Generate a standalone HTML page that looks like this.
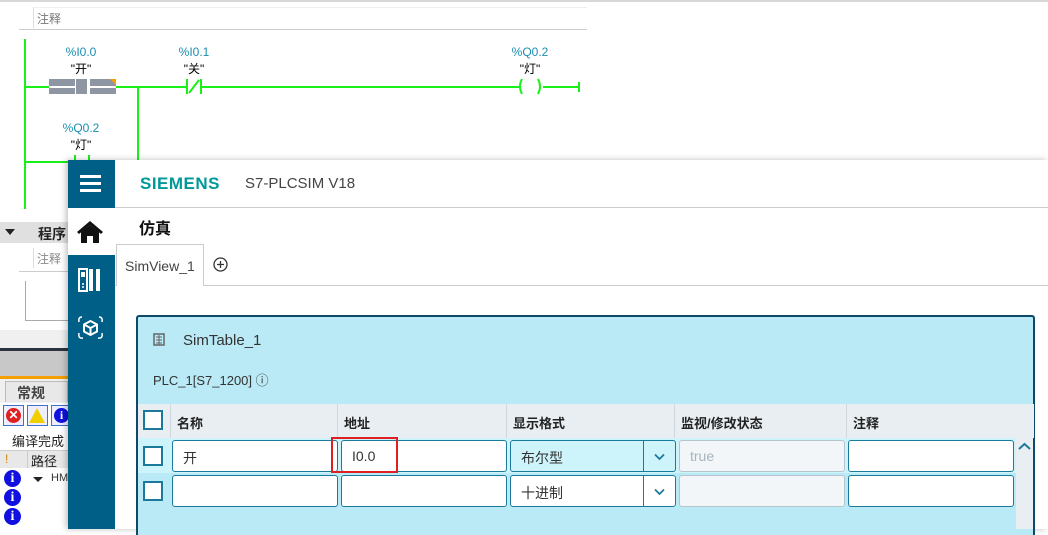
<!DOCTYPE html>
<html><head><meta charset="utf-8"><style>
*{margin:0;padding:0;box-sizing:border-box}
body{width:1048px;height:529px;overflow:hidden;background:#fff;position:relative;font-family:"Liberation Sans","Noto Sans CJK SC",sans-serif;font-size:13px;color:#222}
.a{position:absolute}
.g{position:absolute;background:#19f019}
.lbl{position:absolute;font-size:11px;color:#1a8fb0;width:60px;text-align:center}
.nm{position:absolute;font-size:11px;color:#000;width:60px;text-align:center}
.cb{position:absolute;width:20px;height:20px;border:2px solid #1b7a9b;background:#fff}
.in{position:absolute;height:32px;border:1px solid #1b7a9b;border-radius:3px;background:#fff;font-size:14px;padding:7px 10px;color:#333}
.hd{position:absolute;top:404px;height:34px;font-size:13px;font-weight:bold;padding:9px 6px;border-left:1px solid #d0d8de}
.info{position:absolute;left:4px;width:17px;height:17px;border-radius:50%;background:#1010e0;color:#fff;font:bold 14px "Liberation Serif",serif;text-align:center;line-height:17px}
</style></head><body>
<div class="a" style="left:0;top:0;width:1048px;height:2px;background:#d8d8d8"></div>
<div class="a" style="left:33px;top:7px;width:554px;height:21px;border-left:1px solid #ddd;border-top:1px solid #eee;font-size:12px;color:#777;padding:2px 3px">注释</div>
<div class="a" style="left:19px;top:29px;width:568px;height:1px;background:#ccc"></div>
<div class="g" style="left:24px;top:39px;width:2px;height:170px"></div>
<div class="g" style="left:24px;top:86px;width:25px;height:2px"></div>
<div class="a" style="left:49px;top:79px;width:26px;height:7px;background:#8e96a4"></div>
<div class="a" style="left:49px;top:88px;width:26px;height:6px;background:#8e96a4"></div>
<div class="a" style="left:76px;top:79px;width:11px;height:15px;background:#8e96a4"></div>
<div class="a" style="left:90px;top:79px;width:26px;height:7px;background:#8e96a4"></div>
<div class="a" style="left:90px;top:88px;width:26px;height:6px;background:#8e96a4"></div>
<div class="a" style="left:110px;top:79px;width:6px;height:6px;background:#f5a000;clip-path:polygon(0 0,100% 0,100% 100%)"></div>
<div class="g" style="left:116px;top:86px;width:70px;height:2px"></div>
<div class="g" style="left:137px;top:86px;width:2px;height:76px"></div>
<div class="g" style="left:24px;top:161px;width:115px;height:2px"></div>
<div class="g" style="left:186px;top:79px;width:2px;height:15px"></div>
<div class="g" style="left:200px;top:79px;width:2px;height:15px"></div>
<svg class="a" style="left:186px;top:79px" width="16" height="15"><line x1="3" y1="14" x2="13" y2="1" stroke="#19f019" stroke-width="2"/></svg>
<div class="g" style="left:202px;top:86px;width:318px;height:2px"></div>
<svg class="a" style="left:518px;top:78px" width="26" height="17"><path d="M4 1 Q0 8.5 4 16" stroke="#19f019" stroke-width="2" fill="none"/><path d="M20 1 Q24 8.5 20 16" stroke="#19f019" stroke-width="2" fill="none"/></svg>
<div class="g" style="left:543px;top:86px;width:36px;height:2px"></div>
<div class="g" style="left:578px;top:82px;width:2px;height:10px"></div>
<div class="lbl" style="left:51px;top:45px;font-size:12px">%I0.0</div><div class="nm" style="left:51px;top:60px;font-size:12px">"开"</div>
<div class="lbl" style="left:164px;top:45px;font-size:12px">%I0.1</div><div class="nm" style="left:164px;top:60px;font-size:12px">"关"</div>
<div class="lbl" style="left:500px;top:45px;font-size:12px">%Q0.2</div><div class="nm" style="left:500px;top:60px;font-size:12px">"灯"</div>
<div class="lbl" style="left:51px;top:121px;font-size:12px">%Q0.2</div><div class="nm" style="left:51px;top:136px;font-size:12px">"灯"</div>
<div class="g" style="left:74px;top:155px;width:2px;height:8px"></div>
<div class="g" style="left:88px;top:155px;width:2px;height:8px"></div>
<div class="a" style="left:0;top:222px;width:68px;height:21px;background:#e0e0e0;font-weight:bold;font-size:14px;padding:2px 0 0 38px;color:#222">程序</div>
<div class="a" style="left:5px;top:229px;width:0;height:0;border-left:5px solid transparent;border-right:5px solid transparent;border-top:6px solid #222"></div>
<div class="a" style="left:33px;top:248px;width:35px;height:20px;border-left:1px solid #ddd;font-size:12px;color:#888;padding:2px 3px">注释</div>
<div class="a" style="left:19px;top:271px;width:49px;height:1px;background:#ccc"></div>
<div class="a" style="left:25px;top:281px;width:1px;height:40px;background:#aaa"></div>
<div class="a" style="left:25px;top:320px;width:43px;height:1px;background:#aaa"></div>
<div class="a" style="left:0;top:330px;width:68px;height:19px;background:#f0f0f0"></div>
<div class="a" style="left:0;top:348px;width:68px;height:3px;background:#2b3340"></div>
<div class="a" style="left:0;top:351px;width:68px;height:25px;background:#c8c8c8"></div>
<div class="a" style="left:0;top:376px;width:68px;height:3px;background:#f5a000"></div>
<div class="a" style="left:0;top:379px;width:68px;height:24px;background:#f0f0f0"></div>
<div class="a" style="left:5px;top:381px;width:63px;height:21px;border:1px solid #bbb;border-bottom:none;background:#e8e8e8;font-weight:bold;font-size:14px;color:#444;padding:1px 0 0 11px">常规</div>
<div class="a" style="left:3px;top:405px;width:21px;height:21px;border:1px solid #4070d0;background:#eef"><div style="margin:2px;width:15px;height:15px;border-radius:50%;background:#e02020;color:#fff;font:bold 12px sans-serif;text-align:center;line-height:15px">✕</div></div>
<div class="a" style="left:27px;top:405px;width:21px;height:21px;border:1px solid #4070d0;background:#eef"><div style="margin:2px 1px;width:0;height:0;border-left:8px solid transparent;border-right:8px solid transparent;border-bottom:15px solid #f0d000"></div></div>
<div class="a" style="left:51px;top:405px;width:17px;height:21px;border:1px solid #4070d0;border-right:none;background:#eef"><div style="margin:2px;width:15px;height:15px;border-radius:50%;background:#1010e0;color:#fff;font:bold 12px serif;text-align:center;line-height:15px">i</div></div>
<div class="a" style="left:12px;top:431px;font-size:13px;color:#222">编译完成</div>
<div class="a" style="left:0;top:450px;width:68px;height:18px;background:#e8e8e8;border-top:1px solid #ccc"></div>
<div class="a" style="left:5px;top:452px;font-size:12px;color:#d08000">!</div>
<div class="a" style="left:27px;top:450px;width:1px;height:18px;background:#ccc"></div>
<div class="a" style="left:31px;top:451px;font-size:13px">路径</div>
<div class="info" style="top:470px">i</div><div class="info" style="top:489px">i</div><div class="info" style="top:508px">i</div>
<div class="a" style="left:33px;top:477px;width:0;height:0;border-left:5px solid transparent;border-right:5px solid transparent;border-top:5px solid #222"></div>
<div class="a" style="left:51px;top:472px;font-size:11px;color:#333">HM</div>
<div class="a" style="left:68px;top:160px;width:980px;height:369px;background:#fff;box-shadow:-2px 0 6px rgba(0,0,0,.25)"></div>
<div class="a" style="left:68px;top:160px;width:47px;height:369px;background:#005f87"></div>
<div class="a" style="left:68px;top:208px;width:47px;height:47px;background:#fff"></div>
<div class="a" style="left:80px;top:175px;width:21px;height:3px;background:#fff;box-shadow:0 7px 0 #fff,0 14px 0 #fff"></div>
<svg class="a" style="left:77px;top:220px" width="26" height="23"><path d="M13 1 L0 12 L2 14 L13 5 L24 14 L26 12 Z" fill="#111"/><path d="M4 12 L13 5 L22 12 L22 23 L16 23 L16 16 L10 16 L10 23 L4 23 Z" fill="#111"/></svg>
<svg class="a" style="left:78px;top:268px" width="26" height="24"><rect x="1" y="1" width="8" height="22" fill="none" stroke="#fff" stroke-width="2"/><rect x="11" y="1" width="4" height="22" fill="#fff"/><rect x="18" y="1" width="4" height="22" fill="#fff"/><rect x="3" y="4" width="4" height="5" fill="#fff"/><circle cx="5" cy="16" r="1" fill="#fff"/><circle cx="5" cy="19" r="1" fill="#fff"/></svg>
<svg class="a" style="left:77px;top:314px" width="27" height="27" fill="none" stroke="#fff" stroke-width="2"><path d="M13.5 7 L20 10.5 L20 17.5 L13.5 21 L7 17.5 L7 10.5 Z M7 10.5 L13.5 14 L20 10.5 M13.5 14 L13.5 21"/><path d="M5 3 Q1 3 2 8 M22 3 Q26 3 25 8 M2 19 Q1 25 6 24 M25 19 Q26 25 21 24" stroke-width="1.5"/></svg>
<div class="a" style="left:115px;top:207px;width:933px;height:1px;background:#ccc"></div>
<div class="a" style="left:140px;top:174px;font-size:17px;font-weight:bold;color:#009999;letter-spacing:.5px">SIEMENS</div>
<div class="a" style="left:245px;top:175px;font-size:15px;color:#444">S7-PLCSIM V18</div>
<div class="a" style="left:139px;top:215px;font-size:16px;font-weight:bold;color:#111">仿真</div>
<div class="a" style="left:115px;top:285px;width:933px;height:1px;background:#ccc"></div>
<div class="a" style="left:116px;top:244px;width:88px;height:42px;border:1px solid #ccc;border-bottom:none;background:#fff;font-size:14px;color:#444;padding:13px 0 0 8px">SimView_1</div>
<svg class="a" style="left:213px;top:257px" width="15" height="15" fill="none" stroke="#333" stroke-width="1.3"><circle cx="7.5" cy="7.5" r="6.5"/><path d="M7.5 4v7M4 7.5h7"/></svg>
<div class="a" style="left:136px;top:315px;width:899px;height:220px;background:#b9eaf5;border:2px solid #0e4a68;border-bottom:none;border-radius:3px 3px 0 0"></div>
<svg class="a" style="left:153px;top:333px" width="12" height="13"><rect x="1" y="1" width="10" height="11" fill="none" stroke="#666" stroke-width="1.5"/><path d="M3 4h6M3 7h6M3 10h6M6 2v10" stroke="#666"/></svg>
<div class="a" style="left:183px;top:332px;font-size:15px;color:#333">SimTable_1</div>
<div class="a" style="left:153px;top:370px;font-size:13px;color:#333">PLC_1[S7_1200] ⓘ</div>
<div class="a" style="left:138px;top:404px;width:896px;height:34px;background:#e8eef2"></div>
<div class="a" style="left:138px;top:438px;width:878px;height:35px;background:#cdf3fb"></div>
<div class="a" style="left:1016px;top:438px;width:17px;height:91px;background:#e8eef2"></div>
<svg class="a" style="left:1018px;top:442px" width="13" height="9"><path d="M1 7 L6.5 2 L12 7" fill="none" stroke="#1b7a9b" stroke-width="2"/></svg>
<div class="cb" style="left:143px;top:410px"></div>
<div class="hd" style="left:170px;width:167px">名称</div>
<div class="hd" style="left:337px;width:169px">地址</div>
<div class="hd" style="left:506px;width:172px">显示格式</div>
<div class="hd" style="left:674px;width:172px">监视/修改状态</div>
<div class="hd" style="left:846px;width:170px">注释</div>
<div class="cb" style="left:143px;top:446px"></div>
<div class="cb" style="left:143px;top:481px"></div>
<div class="in" style="left:172px;top:440px;width:166px">开</div>
<div class="in" style="left:341px;top:440px;width:166px">I0.0</div>
<div class="a" style="left:331px;top:437px;width:67px;height:36px;border:2px solid #e02020"></div>
<div class="in" style="left:510px;top:440px;width:166px;background:#cdf3fb">布尔型</div>
<div class="a" style="left:643px;top:441px;width:1px;height:31px;background:#1b7a9b"></div>
<svg class="a" style="left:654px;top:453px" width="11" height="8"><path d="M1 1.5 L5.5 6 L10 1.5" fill="none" stroke="#1b7a9b" stroke-width="1.8"/></svg>
<div class="in" style="left:679px;top:440px;width:166px;background:#f2f6f9;border-color:#b8c4cc;color:#a8b4bc">true</div>
<div class="in" style="left:848px;top:440px;width:166px"></div>
<div class="in" style="left:172px;top:475px;width:166px"></div>
<div class="in" style="left:341px;top:475px;width:166px"></div>
<div class="in" style="left:510px;top:475px;width:166px">十进制</div>
<div class="a" style="left:643px;top:476px;width:1px;height:31px;background:#1b7a9b"></div>
<svg class="a" style="left:654px;top:488px" width="11" height="8"><path d="M1 1.5 L5.5 6 L10 1.5" fill="none" stroke="#1b7a9b" stroke-width="1.8"/></svg>
<div class="in" style="left:679px;top:475px;width:166px;background:#f2f6f9;border-color:#b8c4cc"></div>
<div class="in" style="left:848px;top:475px;width:166px"></div>
</body></html>
